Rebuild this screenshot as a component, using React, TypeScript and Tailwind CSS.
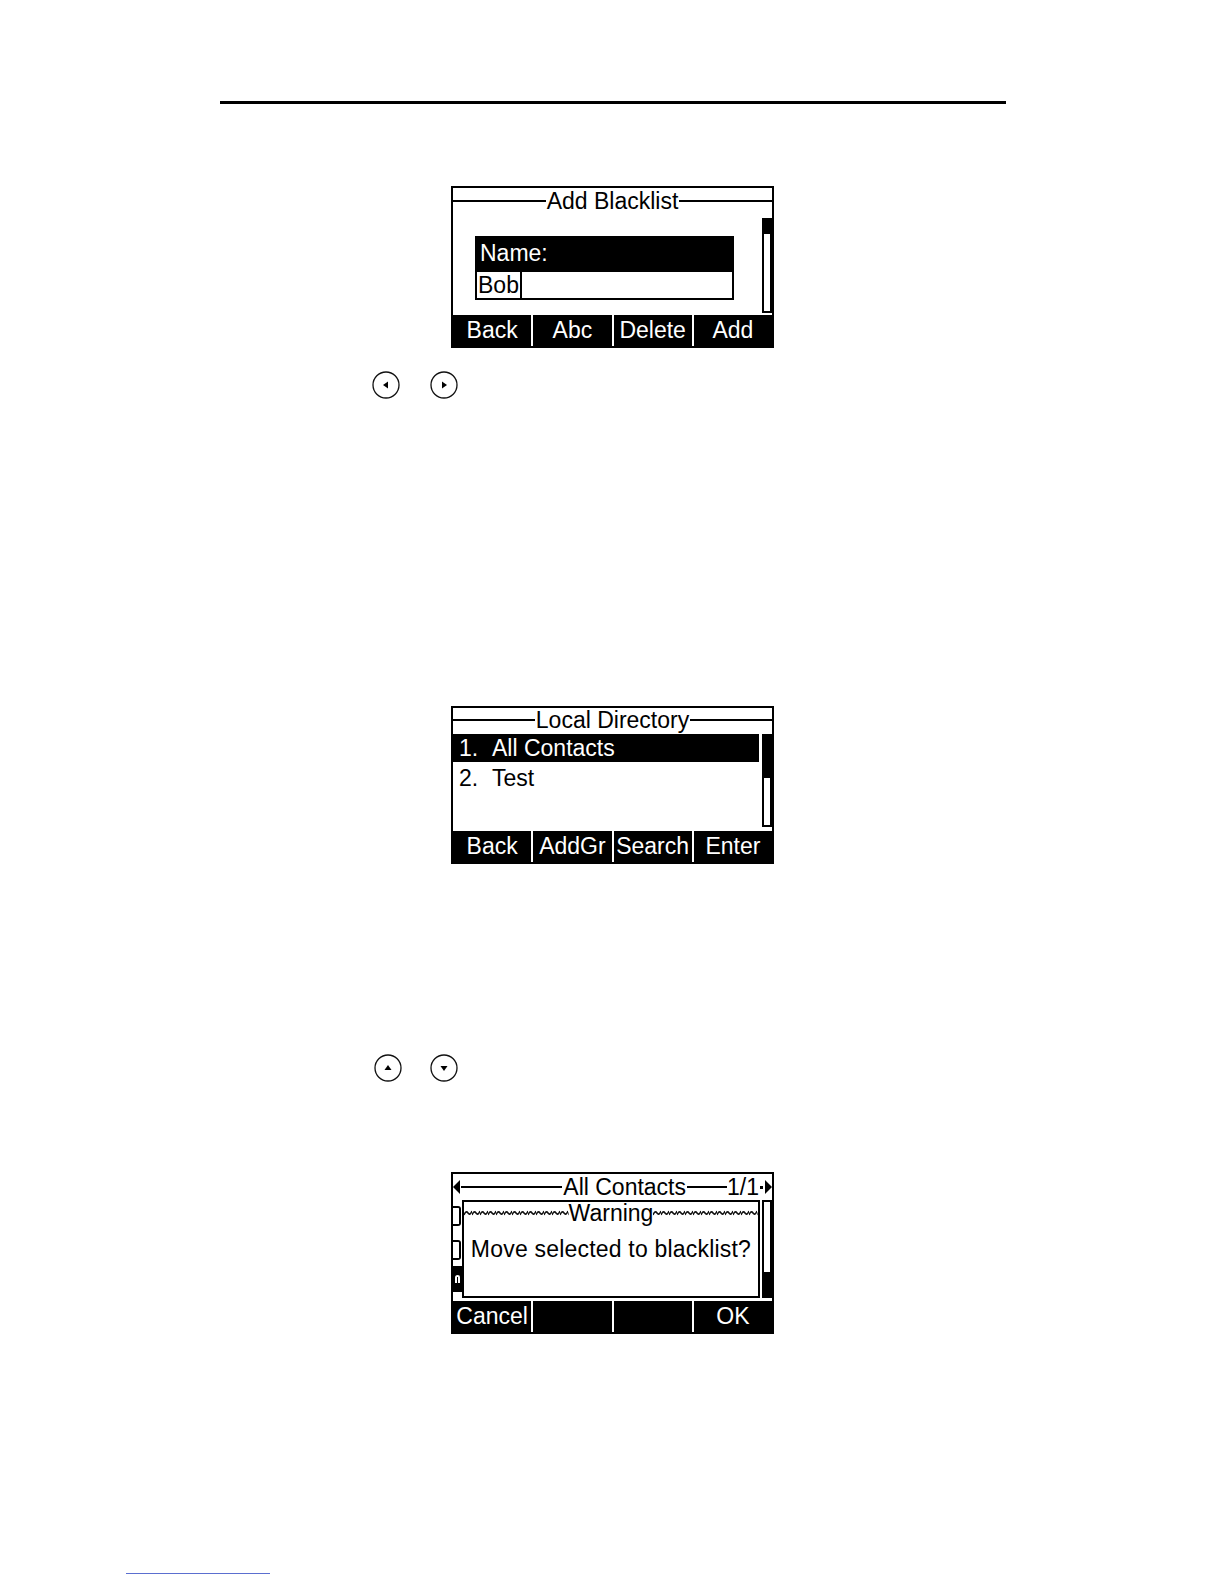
import React from "react";

const lcd = "font-['Liberation_Sans',Arial,sans-serif] text-[23px] leading-none";

function TitleRow({ title }: { title: string }) {
  return (
    <div className="flex h-[26px] items-center">
      <div className="h-[2px] flex-1 bg-black" />
      <span className={`${lcd} px-[1px] text-black`}>{title}</span>
      <div className="h-[2px] flex-1 bg-black" />
    </div>
  );
}

function SoftKeys({ keys }: { keys: string[] }) {
  return (
    <div className="flex h-[31px] bg-black text-white">
      {keys.map((k, i) => (
        <div
          key={i}
          className={`flex flex-1 items-center justify-center ${lcd} ${i > 0 ? "border-l-2 border-white" : ""}`}
        >
          {k}
        </div>
      ))}
    </div>
  );
}

function ScrollBar({ top, fill, className }: { top: boolean; fill: number; className: string }) {
  return (
    <div className={`flex w-[10px] flex-col border-2 border-black ${className}`}>
      {top && <div className="bg-black" style={{ height: fill }} />}
      <div className="flex-1 bg-white" />
      {!top && <div className="bg-black" style={{ height: fill }} />}
    </div>
  );
}

function NavKey({ dir }: { dir: "left" | "right" | "up" | "down" }) {
  const tri = {
    left: "M16 10.5 L11 14 L16 17.5 Z",
    right: "M12 10.5 L17 14 L12 17.5 Z",
    up: "M10.5 16 L14 11 L17.5 16 Z",
    down: "M10.5 12 L14 17 L17.5 12 Z",
  }[dir];
  return (
    <svg width="28" height="28" viewBox="0 0 28 28">
      <circle cx="14" cy="14" r="13" fill="white" stroke="#111" strokeWidth="1.3" />
      <path d={tri} fill="#000" />
    </svg>
  );
}

function Wave({ id }: { id: string }) {
  return (
    <svg className="h-[8px] w-0 min-w-0 flex-1" preserveAspectRatio="none">
      <defs>
        <pattern id={id} width="8" height="8" patternUnits="userSpaceOnUse">
          <path d="M0 6 Q2 1 4 4 T8 2" fill="none" stroke="#111" strokeWidth="1.5" />
        </pattern>
      </defs>
      <rect width="100%" height="100%" fill={`url(#${id})`} />
    </svg>
  );
}

function AddBlacklistScreen() {
  return (
    <div className="flex h-[162px] w-[323px] flex-col overflow-hidden border-2 border-black bg-white">
      <TitleRow title="Add Blacklist" />
      <div className="flex flex-1">
        <div className="flex-1 pl-[22px] pr-[28px] pt-[22px]">
          <div className="flex h-[34px] items-center bg-black pl-[5px] text-white">
            <span className={lcd}>Name:</span>
          </div>
          <div className="flex h-[30px] border-2 border-black">
            <div className={`flex items-center border-r-2 border-black px-[1px] ${lcd} text-black`}>Bob</div>
            <div className="flex-1" />
          </div>
        </div>
        <ScrollBar top fill={14} className="mb-[2px] mt-[4px]" />
      </div>
      <SoftKeys keys={["Back", "Abc", "Delete", "Add"]} />
    </div>
  );
}

function LocalDirectoryScreen() {
  return (
    <div className="flex h-[158px] w-[323px] flex-col overflow-hidden border-2 border-black bg-white">
      <div className="flex h-[24px] items-center">
        <div className="h-[2px] flex-1 bg-black" />
        <span className={`${lcd} px-[1px] text-black`}>Local Directory</span>
        <div className="h-[2px] flex-1 bg-black" />
      </div>
      <div className="flex flex-1">
        <div className="flex-1 pr-[3px] pt-[2px]">
          <div className={`flex h-[28px] items-center bg-black pl-[6px] text-white ${lcd}`}>
            <span className="w-[33px]">1.</span>
            <span>All Contacts</span>
          </div>
          <div className={`flex h-[32px] items-center pl-[6px] text-black ${lcd}`}>
            <span className="w-[33px]">2.</span>
            <span>Test</span>
          </div>
        </div>
        <ScrollBar top fill={42} className="mb-[4px] mt-[2px]" />
      </div>
      <SoftKeys keys={["Back", "AddGr", "Search", "Enter"]} />
    </div>
  );
}

function AllContactsScreen() {
  return (
    <div className="flex h-[162px] w-[323px] flex-col overflow-hidden border-2 border-black bg-white">
      <div className="flex h-[26px] items-center">
        <svg width="8" height="14" viewBox="0 0 8 14">
          <path d="M7 0 L0 7 L7 14 Z" fill="#000" />
        </svg>
        <div className="h-[2px] flex-1 bg-black" />
        <span className={`${lcd} px-[1px] text-black`}>All Contacts</span>
        <div className="h-[2px] w-[40px] bg-black" />
        <span className={`${lcd} text-black`}>1/1</span>
        <div className="mx-[1px] h-[3px] w-[3px] bg-black" />
        <svg width="8" height="14" viewBox="0 0 8 14">
          <path d="M1 0 L8 7 L1 14 Z" fill="#000" />
        </svg>
      </div>
      <div className="flex min-w-0 flex-1 pb-[3px]">
        <div className="flex w-[9px] shrink-0 flex-col pt-[6px]">
          <div className="h-[20px] w-[8px] rounded-r-[3px] border-2 border-l-0 border-black" />
          <div className="h-[14px]" />
          <div className="h-[20px] w-[8px] rounded-r-[3px] border-2 border-l-0 border-black" />
          <div className="h-[6px]" />
          <div className="flex h-[26px] w-[9px] items-center justify-center bg-black">
            <div className="h-[8px] w-[5px] rounded-t-full border-2 border-b-0 border-white" />
          </div>
        </div>
        <div className="flex min-w-0 flex-1 flex-col border-2 border-black bg-white">
          <div className="flex h-[22px] items-center">
            <Wave id="wl" />
            <span className={`${lcd} text-black`}>Warning</span>
            <Wave id="wr" />
          </div>
          <div className={`flex h-[50px] items-center justify-center whitespace-nowrap tracking-[0.2px] text-black ${lcd}`}>
            Move selected to blacklist?
          </div>
        </div>
        <ScrollBar top={false} fill={24} className="ml-[2px] shrink-0" />
      </div>
      <SoftKeys keys={["Cancel", "", "", "OK"]} />
    </div>
  );
}

export default function App() {
  return (
    <div className="flex w-full flex-col bg-white">
      <div className="ml-[220px] flex w-[786px] flex-col pt-[101px]">
        <div className="h-[3px] bg-black" />
        <div className="ml-[231px] mt-[82px]">
          <AddBlacklistScreen />
        </div>
        <div className="ml-[152px] mt-[23px] flex gap-[30px]">
          <NavKey dir="left" />
          <NavKey dir="right" />
        </div>
        <div className="ml-[231px] mt-[307px]">
          <LocalDirectoryScreen />
        </div>
        <div className="ml-[154px] mt-[190px] flex gap-[28px]">
          <NavKey dir="up" />
          <NavKey dir="down" />
        </div>
        <div className="ml-[231px] mt-[90px]">
          <AllContactsScreen />
        </div>
      </div>
      <div className="ml-[126px] mt-[239px] h-[1px] w-[144px] bg-[#5b6fd0]" />
    </div>
  );
}
